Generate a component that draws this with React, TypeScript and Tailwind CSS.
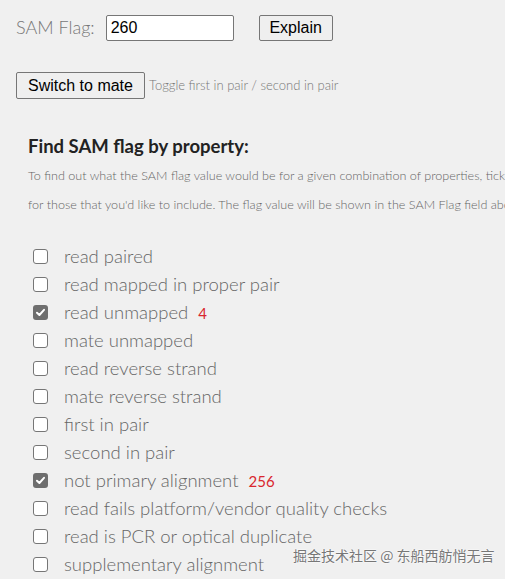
const FLAGS: { label: string; value: number; checked?: boolean }[] = [
  { label: "read paired", value: 1 },
  { label: "read mapped in proper pair", value: 2 },
  { label: "read unmapped", value: 4, checked: true },
  { label: "mate unmapped", value: 8 },
  { label: "read reverse strand", value: 16 },
  { label: "mate reverse strand", value: 32 },
  { label: "first in pair", value: 64 },
  { label: "second in pair", value: 128 },
  { label: "not primary alignment", value: 256, checked: true },
  { label: "read fails platform/vendor quality checks", value: 512 },
  { label: "read is PCR or optical duplicate", value: 1024 },
  { label: "supplementary alignment", value: 2048 },
];

function Box({ checked }: { checked?: boolean }) {
  if (checked) {
    return (
      <span className="flex h-[15px] w-[15px] items-center justify-center rounded-[3px] bg-[#6e6e6e]">
        <svg width="11" height="11" viewBox="0 0 10 10">
          <path d="M1.8 5.2 L4 7.3 L8.2 2.6" fill="none" stroke="#fff" strokeWidth="1.8" strokeLinecap="round" strokeLinejoin="round" />
        </svg>
      </span>
    );
  }
  return <span className="block h-[15px] w-[15px] rounded-[3px] border border-[#767676] bg-white" />;
}

export default function App() {
  return (
    <div className="relative h-[579px] w-[505px] overflow-hidden bg-[#f0f0f0] font-['Lato','Open_Sans',sans-serif]">
      <div className="flex items-center pl-[16px] pt-[14px]">
        <span className="text-[18px] font-light text-[#777]">SAM Flag:</span>
        <input
          defaultValue="260"
          className="ml-[11px] h-[26px] w-[128px] rounded-[2px] border border-[#767676] bg-white px-[4px] font-['Liberation_Sans',Arial,sans-serif] text-[16px] text-black outline-none"
        />
        <button className="ml-[25px] h-[26px] w-[74px] rounded-[2px] border border-[#767676] bg-[#efefef] font-['Liberation_Sans',Arial,sans-serif] text-[16px] text-black">
          Explain
        </button>
      </div>

      <div className="mt-[31px] flex items-center pl-[16px]">
        <button className="h-[27px] w-[129px] rounded-[2px] border border-[#767676] bg-[#efefef] font-['Liberation_Sans',Arial,sans-serif] text-[16px] text-black">
          Switch to mate
        </button>
        <span className="ml-[4px] text-[13px] font-light text-[#777]">Toggle first in pair / second in pair</span>
      </div>

      <h2 className="mt-[34px] pl-[28px] text-[18.5px] font-bold text-[#222]">Find SAM flag by property:</h2>
      <p className="mt-[0px] whitespace-nowrap pl-[28px] text-[12.6px] font-light leading-[29px] text-[#666]">
        To find out what the SAM flag value would be for a given combination of properties, tick the boxes
        <br />
        for those that you'd like to include. The flag value will be shown in the SAM Flag field above.
      </p>

      <ul className="mt-[24px] flex flex-col pl-[33px]">
        {FLAGS.map((f) => (
          <li key={f.value} className="flex h-[28px] items-center">
            <Box checked={f.checked} />
            <span className="ml-[16px] text-[18.5px] font-light text-[#666]">{f.label}</span>
            {f.checked && <span className="ml-[10px] text-[15px] text-[#d9272e]">{f.value}</span>}
          </li>
        ))}
      </ul>

      <div className="absolute left-[293px] top-[545px] font-['Noto_Sans_CJK_SC',sans-serif] text-[14px] text-[#777] [text-shadow:0_0_2px_#fff,0_0_2px_#fff]">
        掘金技术社区 @ 东船西舫悄无言
      </div>
    </div>
  );
}
